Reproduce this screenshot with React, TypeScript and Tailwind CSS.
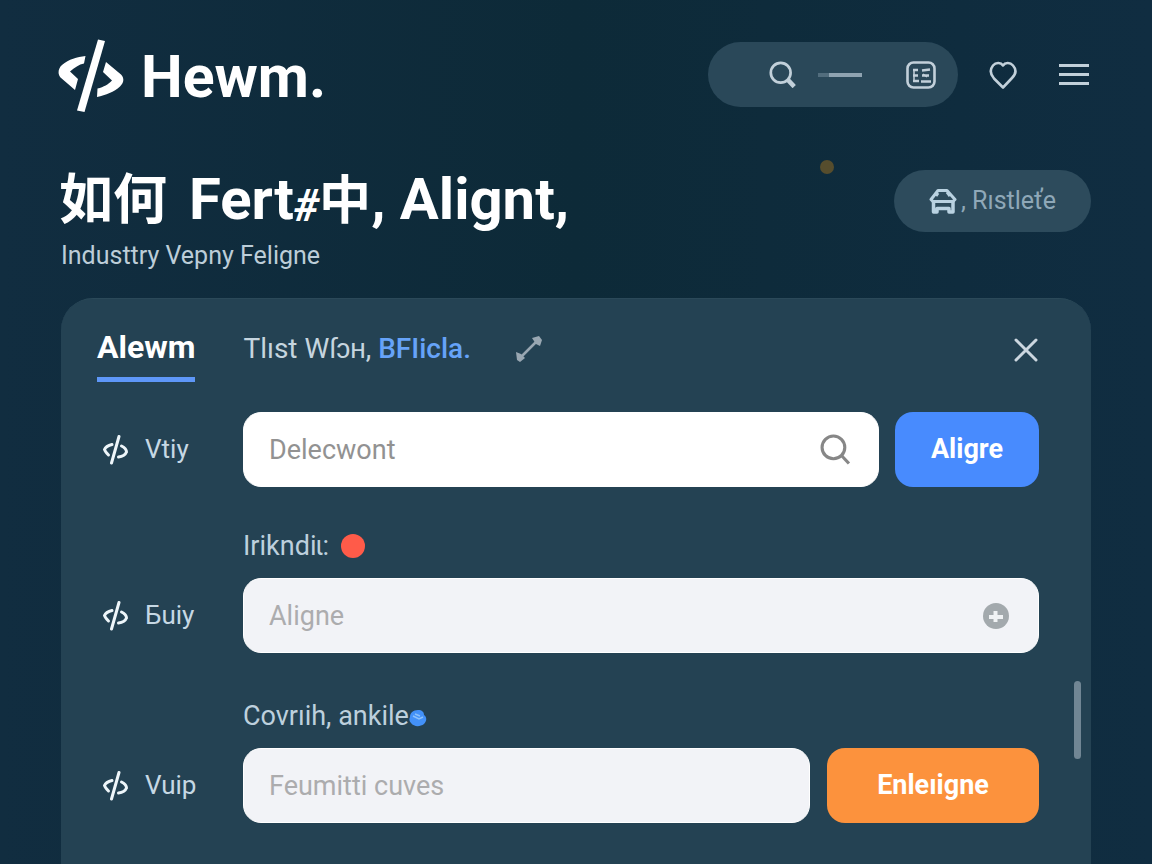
import type { ReactNode } from 'react';

function Logo() {
  return (
    <svg viewBox="0 0 66 74" className="h-[74px] w-[66px]" fill="currentColor" aria-hidden="true">
      <path d="M40 0.500L47 2L26.500 73L19 71.500Z" />
      <path d="M27.500 17L26 24.500C21 25.500 16.500 28.500 12 32.500L20 40L17 51L2.500 38.500C-0.500 35 0 29.500 4 26C11 20 19 18 27.500 17Z" />
      <path d="M48 23L63 35.500C66.500 39 66 44 62 47.500C56 53 48 56 39 58L39.500 49.500C46 48 50 45.500 54 41.500L45 33Z" />
    </svg>
  );
}

function CodeMark() {
  return (
    <svg viewBox="0 0 27 30" className="h-[30px] w-[27px] text-[#eef6fa]" fill="none" stroke="currentColor" strokeWidth="3" strokeLinecap="round" aria-hidden="true">
      <path d="M17 1.500L9.500 28" />
      <path d="M10 9.500C6 10.500 3.500 12 2.500 14.500C3 16.500 4.500 18 6.500 20" />
      <path d="M19.500 11C22.500 12.500 24.500 14.500 24.500 17C23.500 19.500 20.500 21.500 16.500 22" />
    </svg>
  );
}

function SearchIcon({ className, handle }: { className: string; handle: number }) {
  return (
    <svg viewBox="0 0 30 30" className={className} fill="none" stroke="currentColor" aria-hidden="true">
      <circle cx="13" cy="13" r="11" strokeWidth="3" />
      <path d="M21 21L28 28.500" strokeWidth={handle} />
    </svg>
  );
}

function RowLabel({ htmlFor, children }: { htmlFor: string; children: ReactNode }) {
  return (
    <label htmlFor={htmlFor} className="flex w-[146px] shrink-0 items-center gap-4 pl-[5px] text-[26px] text-[#c6d8e4]">
      <CodeMark />
      {children}
    </label>
  );
}

const inputClass =
  'h-[75px] w-full min-w-0 rounded-[18px] border border-white px-[25px] text-[27px] text-[#555] outline-none placeholder:opacity-100';

export default function App() {
  return (
    <div className="flex min-h-screen flex-col bg-linear-to-r from-[#112d40] via-[#0d2a38] to-[#102d41] px-[61px] pt-[39px] font-[Roboto,'Noto_Sans_CJK_SC',sans-serif]">
      <header className="flex items-center justify-between">
        <a href="#" className="-ml-[3px] flex items-center gap-[17px] text-white">
          <Logo />
          <span className="text-[59px] leading-[73px] font-bold">Hewm.</span>
        </a>
        <div className="mb-[3px] flex items-center text-[#c2d0da]">
          <div className="flex h-[65px] w-[250px] items-center rounded-full bg-[#2a4859] pr-[22px] pl-[61px]">
            <button type="button" aria-label="Search">
              <SearchIcon className="size-[27px]" handle={5} />
            </button>
            <span className="ml-[22px] flex h-1 w-11">
              <span className="w-[11px] bg-[#526d7d]" />
              <span className="flex-1 bg-[#8fa3b1]" />
            </span>
            <button type="button" aria-label="List" className="ml-auto">
              <svg viewBox="0 0 30 28" className="h-7 w-[30px]" fill="none" stroke="currentColor" aria-hidden="true">
                <rect x="1.500" y="1.500" width="27" height="25" rx="6" strokeWidth="2.600" />
                <path d="M7 9H12M7 14.500H12M7 20H13M16 9.500L24 8.500M16 14.500H23M15 20.500H25" strokeWidth="2.400" />
                <path d="M8 8V21M17 13L21 16" strokeWidth="1.500" />
              </svg>
            </button>
          </div>
          <button type="button" aria-label="Favourites" className="ml-[31px]">
            <svg viewBox="0 0 28 28" className="size-7" fill="none" stroke="currentColor" strokeWidth="2.600" strokeLinejoin="round" aria-hidden="true">
              <path d="M14 4.500C16 1.500 21 1 24 4.500C27.500 8.500 27 13 23 17L14 26.500L5 17.500C1 13 0.500 9 4 4.500C7 1 12 1.500 14 4.500Z" />
            </svg>
          </button>
          <button type="button" aria-label="Menu" className="mr-[2px] ml-[42px] flex flex-col gap-[6px]">
            <span className="h-[3px] w-[30px] bg-current" />
            <span className="h-[3px] w-[30px] bg-current" />
            <span className="h-[3px] w-[30px] bg-current" />
          </button>
        </div>
      </header>

      <section className="relative mt-[50px] flex items-start justify-between pb-6">
        <div>
          <h1 className="-ml-[2px] flex items-baseline text-[58px] leading-[72px] font-bold whitespace-pre text-white">
            <span className="text-[54px]">如何</span>
            <span className="ml-[22px]">Fert</span>
            <span className="self-end text-[44px] leading-[64px] italic">#</span>
            <span className="text-[52px]">中</span>
            <span>, Alignt,</span>
          </h1>
          <p className="text-[25px] leading-9 text-[#bccdd8]">Industtry Vepny Feligne</p>
        </div>
        <button type="button" className="mt-[7px] flex h-[62px] w-[197px] items-center justify-center rounded-full bg-[#2d4b5c] text-[25px] text-[#8fa8b8]">
          <svg viewBox="0 0 28 26" className="mr-1 h-[26px] w-7 text-[#b9d2e1]" fill="none" stroke="currentColor" strokeWidth="3" strokeLinejoin="round" aria-hidden="true">
            <path d="M9 2.500H18L26 11.500L24 13.500H4L2 11.500Z" />
            <path d="M9 5L7 8M18 4L21 8" />
            <path d="M4.500 13V24H8V20.500H20V24H24V13" strokeWidth="3.500" />
          </svg>
          , Rıstleťe
        </button>
        <span className="absolute top-[-3px] left-[759px] size-[14px] rounded-full bg-[#564d2d]" />
      </section>

      <main className="relative flex-1 rounded-t-[32px] border-t border-[#2b4959] bg-[#244253] px-9 pb-10">
        <div className="flex items-start pt-7 pr-4 text-[28px] leading-10">
          <a href="#" className="border-b-[5px] border-[#5e97f8] pb-[10px] text-[32px] font-bold text-white">Alewm</a>
          <a href="#" className="mt-[2px] ml-12 text-[#c6d5df]">
            Tlıst Wſɔʜ, <span className="font-medium text-[#66a3f8]">BFIicla.</span>
          </a>
          <button type="button" aria-label="Expand" className="mt-2 ml-11 text-[#99a7b2]">
            <svg viewBox="0 0 28 28" className="size-7" fill="currentColor" aria-hidden="true">
              <path d="M6 22L22 6" stroke="currentColor" strokeWidth="2.500" />
              <path d="M17 3L24 1L27 5L25 11L21 9ZM1 17L6 19L10 23L5 27L2 25Z" />
            </svg>
          </button>
          <button type="button" aria-label="Close" className="mt-[10px] ml-auto text-[#ccd7e0]">
            <svg viewBox="0 0 26 26" className="size-[26px]" stroke="currentColor" strokeWidth="3" strokeLinecap="round" aria-hidden="true">
              <path d="M3 3L23 23M23 3L3 23" />
            </svg>
          </button>
        </div>

        <form className="pr-4" onSubmit={(e) => e.preventDefault()}>
          <div className="mt-[30px] flex items-center">
            <RowLabel htmlFor="vtiy">Vtiy</RowLabel>
            <div className="relative min-w-0 flex-1">
              <input id="vtiy" type="text" placeholder="Delecwont" className={`${inputClass} bg-white placeholder:text-[#929292]`} />
              <SearchIcon className="absolute top-[22px] right-[28px] size-[31px] text-[#878787]" handle={3} />
            </div>
            <button type="submit" className="ml-4 h-[75px] w-36 shrink-0 rounded-[18px] bg-[#488bfe] text-[27px] font-bold text-white">Aligre</button>
          </div>

          <div className="mt-[39px] mb-3 flex items-center gap-3 pl-[146px] text-[27px] leading-10 text-[#bdd0dd]">
            <span>Irikndiɩ:</span>
            <span className="size-6 rounded-full bg-[#ff5b49]" />
          </div>
          <div className="flex items-center">
            <RowLabel htmlFor="buiy">Бuiy</RowLabel>
            <div className="relative min-w-0 flex-1">
              <input id="buiy" type="text" placeholder="Aligne" className={`${inputClass} bg-[#f2f3f7] placeholder:text-[#acacae]`} />
              <button type="button" aria-label="Add" className="absolute top-[25px] right-[30px]">
                <svg viewBox="0 0 26 26" className="size-[26px]" aria-hidden="true">
                  <circle cx="13" cy="13" r="13" fill="#a3a9ad" />
                  <path d="M6 14H20M12.500 8V19" stroke="#f0f2f4" strokeWidth="4" />
                </svg>
              </button>
            </div>
          </div>

          <div className="mt-[43px] mb-3 flex items-center pl-[146px] text-[27px] leading-10 text-[#bdd0dd]">
            <span>Covrıih, ankile</span>
            <svg viewBox="0 0 18 18" className="mt-1 size-[18px]" aria-hidden="true">
              <path d="M1 8C1 4 4 1 9 1C13 1 15 3 15 6C18 8 18 12 15 15C11 18 5 18 2 14C0 12 0 10 1 8Z" fill="#4391f8" />
              <path d="M4 7L10 10L14 8M6 5L11 7" fill="none" stroke="#8bc1fb" strokeWidth="1.500" />
            </svg>
          </div>
          <div className="flex items-center">
            <RowLabel htmlFor="vuip">Vuip</RowLabel>
            <input id="vuip" type="text" placeholder="Feumitti cuves" className={`${inputClass} flex-1 bg-[#f2f3f7] placeholder:text-[#acacae]`} />
            <button type="submit" className="ml-[17px] h-[75px] w-[212px] shrink-0 rounded-[18px] bg-[#fc923d] text-[27px] font-bold text-white">Enleıigne</button>
          </div>
        </form>
        <span className="absolute top-[382px] right-[10px] h-[78px] w-[7px] rounded-full bg-[#718694]" />
      </main>
    </div>
  );
}
